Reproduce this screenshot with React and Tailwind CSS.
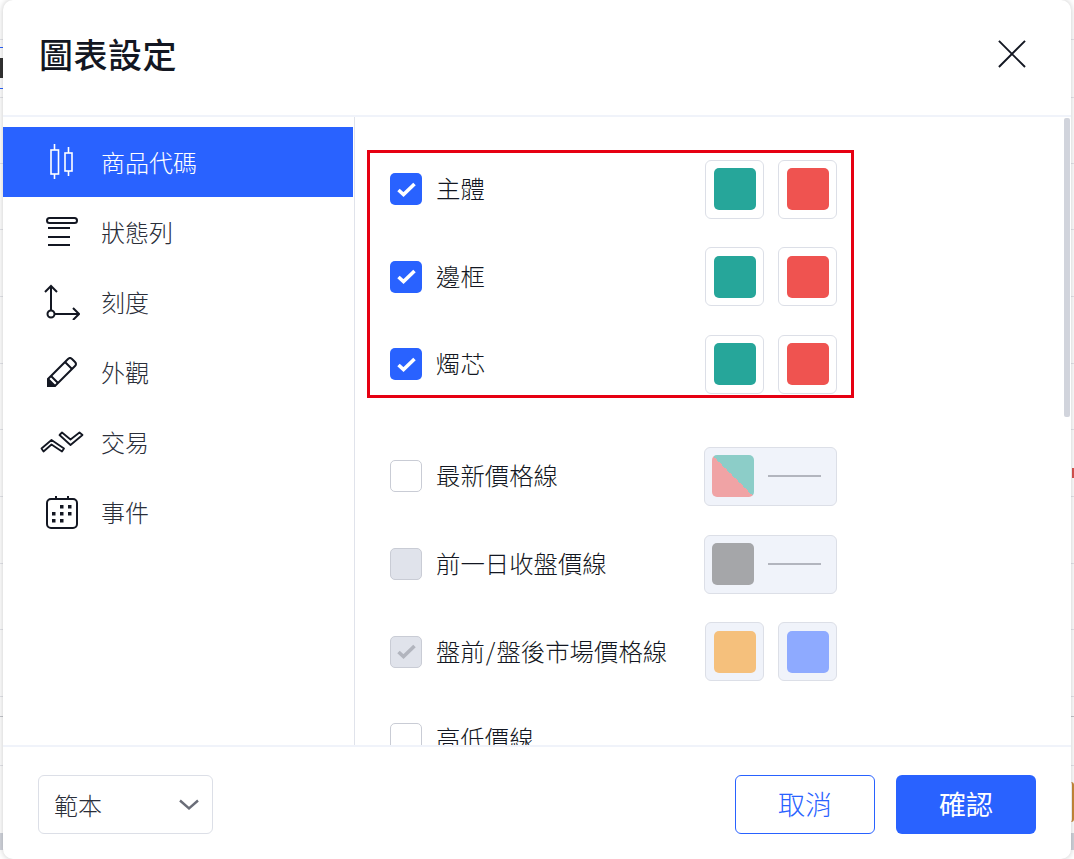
import React from "react";

const font = "font-['Noto_Sans_CJK_TC','Noto_Sans_CJK_SC',sans-serif]";

const CandleIcon = () => (
  <svg width="24" height="36" viewBox="0 0 24 36" fill="none" stroke="currentColor" strokeWidth="1.6">
    <path d="M4.5 0v6M4.5 30v5M18.5 3v6M18.5 27v5" />
    <rect x="1" y="6" width="7.5" height="24" />
    <rect x="15" y="9" width="7" height="18" />
  </svg>
);

const StatusIcon = () => (
  <svg width="32" height="30" viewBox="0 0 32 30" fill="none" stroke="currentColor" strokeWidth="2">
    <rect x="1" y="1" width="30" height="5" rx="2.5" />
    <path d="M2 11h22M2 20h22M2 28h22" />
  </svg>
);

const ScaleIcon = () => (
  <svg width="36" height="36" viewBox="0 0 36 36" fill="none" stroke="currentColor" strokeWidth="2">
    <path d="M7 27V2M1 8l6-6 6 6M11 30h24M29 24l6 6-6 6" />
    <circle cx="7" cy="30" r="3.5" />
  </svg>
);

const PencilIcon = () => (
  <svg width="30" height="30" viewBox="0 0 30 30" fill="none" stroke="currentColor" strokeWidth="2">
    <path d="M1 29v-7L21 2q2-2 4 0l3 3q2 2 0 4L8 29z" />
    <path d="M1 22l7 7M4 19l7 7M18 5l7 7" />
    <path d="M1 29v-5l5 5z" fill="currentColor" />
  </svg>
);

const TradeIcon = () => (
  <svg width="44" height="22" viewBox="0 0 44 22" fill="none" stroke="currentColor" strokeWidth="1.8" strokeLinejoin="round">
    <path d="M1.5 17.5L11.5 9L24 17.5L22 20.5L11.5 13.5L3.5 20.5Z" />
    <path d="M19.5 4L22 1.5L30.5 8.5L39.5 1.5L42.5 4L30.5 14Z" />
  </svg>
);

const CalendarIcon = () => (
  <svg width="32" height="33" viewBox="0 0 32 33" fill="none" stroke="currentColor" strokeWidth="2">
    <rect x="1" y="3" width="30" height="29" rx="4" />
    <path d="M10 0v3M22 0v3" />
    <g fill="currentColor" stroke="none">
      <rect x="14" y="9" width="3.5" height="3.5" />
      <rect x="22" y="9" width="3.5" height="3.5" />
      <rect x="6" y="16" width="3.5" height="3.5" />
      <rect x="14" y="16" width="3.5" height="3.5" />
      <rect x="22" y="16" width="3.5" height="3.5" />
      <rect x="6" y="23" width="3.5" height="3.5" />
      <rect x="14" y="23" width="3.5" height="3.5" />
    </g>
  </svg>
);

const navItems = [
  { label: "商品代碼", icon: <CandleIcon />, active: true },
  { label: "狀態列", icon: <StatusIcon /> },
  { label: "刻度", icon: <ScaleIcon /> },
  { label: "外觀", icon: <PencilIcon /> },
  { label: "交易", icon: <TradeIcon /> },
  { label: "事件", icon: <CalendarIcon /> },
];

// grey row lines of the page behind the dialog
const pageLines = [39, 97, 163, 229, 296, 363, 429, 496, 563, 629, 696, 765];

const Check = ({ color }) => (
  <svg width="19" height="15" viewBox="0 0 19 15" fill="none" stroke={color} strokeWidth="3.6">
    <path d="M1.5 8l5 4.5L17.5 2" />
  </svg>
);

const Checkbox = ({ state }) => {
  if (state === "on") {
    return (
      <div className="flex h-[32px] w-[32px] shrink-0 items-center justify-center rounded-[5px] bg-[#2962ff]">
        <Check color="#ffffff" />
      </div>
    );
  }
  if (state === "disabled") {
    return (
      <div className="flex h-[32px] w-[32px] shrink-0 items-center justify-center rounded-[5px] border border-[#c9ccd5] bg-[#e0e3eb]">
        <Check color="#b2b5be" />
      </div>
    );
  }
  if (state === "muted") {
    return <div className="h-[32px] w-[32px] shrink-0 rounded-[5px] border border-[#c9ccd5] bg-[#e0e3eb]" />;
  }
  return <div className="h-[32px] w-[32px] shrink-0 rounded-[5px] border border-[#c9ccd5] bg-white" />;
};

const Swatch = ({ className, muted }) => (
  <div className={`flex h-[59px] w-[59px] items-center justify-center rounded-[6px] border border-[#dcdfe7] ${muted ? "bg-[#f0f3fa]" : "bg-white"}`}>
    <div className={`h-[42px] w-[42px] rounded-[5px] ${className}`} />
  </div>
);

const LineSwatch = ({ children }) => (
  <div className="flex h-[59px] w-[133px] items-center rounded-[6px] border border-[#dcdfe7] bg-[#f0f3fa] pl-[7px]">
    {children}
    <div className="ml-[14px] h-[2px] w-[53px] bg-[#b2b5be]" />
  </div>
);

const Row = ({ label, state, children, className = "" }) => (
  <div className={`flex h-[59px] items-center ${className}`}>
    <Checkbox state={state} />
    <span className="ml-[14px] flex-1 pb-[2px] text-[24.4px] font-light leading-[32px] text-[#131722]">{label}</span>
    <div className="flex gap-[14px]">{children}</div>
  </div>
);

export default function App() {
  return (
    <div className={`relative h-[859px] w-[1074px] overflow-hidden bg-white ${font}`}>
      {/* page behind the dialog */}
      {pageLines.map((y) => (
        <div key={y} className="absolute left-0 h-px w-full bg-[#e4e5ea]" style={{ top: y }} />
      ))}
      <div className="absolute left-0 top-[716px] h-px w-full bg-[#c4c6cc]" />
      <div className="absolute left-0 top-[47px] h-px w-[3px] bg-[#2962ff]" />
      <div className="absolute left-0 top-[88px] h-px w-[3px] bg-[#2962ff]" />
      <div className="absolute left-0 top-[58px] h-[20px] w-[3px] bg-[#333]" />
      <div className="absolute right-0 top-[468px] h-[10px] w-[2px] bg-[#d9534f]" />
      <div className="absolute right-0 top-[782px] h-[40px] w-[3px] rounded-r-full border-r-2 border-[#c98a3a]" />
      <div className="absolute left-0 top-[833px] h-[17px] w-full bg-[#d1d4dc]" />

      <div className="absolute bottom-0 left-[3px] top-0 flex w-[1068px] flex-col rounded-[10px] bg-white shadow-[0_0_6px_rgba(0,0,0,0.22)]">
        <header className="flex h-[117px] shrink-0 items-center justify-between border-b-2 border-[#f0f3fa] pb-[8px] pl-[36px] pr-[45px]">
          <h1 className="text-[34px] font-medium leading-[44px] tracking-[0.5px] text-[#131722]">圖表設定</h1>
          <svg width="29" height="29" viewBox="0 0 30 30" fill="none" stroke="#131722" strokeWidth="2">
            <path d="M2 2l27 27M29 2L2 29" />
          </svg>
        </header>

        <div className="relative flex min-h-0 flex-1">
          <nav className="w-[352px] shrink-0 border-r border-[#e0e3eb] pt-[10px]">
            {navItems.map((item) => (
              <div
                key={item.label}
                className={`mr-[1px] flex h-[70px] items-center text-[24px] font-light ${item.active ? "bg-[#2962ff] text-white" : "text-[#131722]"}`}
              >
                <div className="flex w-[98px] shrink-0 justify-center pl-[20px]">{item.icon}</div>
                <span className={item.active ? "" : "text-[#2a2e39]"}>{item.label}</span>
              </div>
            ))}
          </nav>

          <div className="min-w-0 flex-1 overflow-hidden pl-[35px] pr-[234px] pt-[42.5px]">
            <div className="flex flex-col gap-[28.6px]">
              <Row label="主體" state="on">
                <Swatch className="bg-[#26a69a]" />
                <Swatch className="bg-[#ef5350]" />
              </Row>
              <Row label="邊框" state="on">
                <Swatch className="bg-[#26a69a]" />
                <Swatch className="bg-[#ef5350]" />
              </Row>
              <Row label="燭芯" state="on">
                <Swatch className="bg-[#26a69a]" />
                <Swatch className="bg-[#ef5350]" />
              </Row>
              <Row label="最新價格線" state="off" className="mt-[24.7px]">
                <LineSwatch>
                  <div className="h-[42px] w-[42px] rounded-[5px] bg-[linear-gradient(45deg,#f0a3a5_50%,#8ccdc8_50%)]" />
                </LineSwatch>
              </Row>
              <Row label="前一日收盤價線" state="muted">
                <LineSwatch>
                  <div className="h-[42px] w-[42px] rounded-[5px] bg-[#a5a6a9]" />
                </LineSwatch>
              </Row>
              <Row label={<>盤前<span className="mx-px">/</span>盤後市場價格線</>} state="disabled">
                <Swatch muted className="bg-[#f5c07c]" />
                <Swatch muted className="bg-[#8eaaff]" />
              </Row>
              <Row label="高低價線" state="off" />
            </div>
          </div>

          {/* scrollbar */}
          <div className="absolute right-[1px] top-[1px] h-[299px] w-[6px] rounded-[2px] bg-[#d1d4dc]" />

          {/* red highlight */}
          <div className="pointer-events-none absolute left-[364px] top-[33px] h-[248px] w-[487px] border-[3px] border-[#e60012]" />
        </div>

        <footer className="flex h-[114px] shrink-0 items-center justify-between border-t-2 border-[#f0f3fa] px-[35px] pt-[3px]">
          <div className="flex h-[59px] w-[175px] items-center justify-between rounded-[6px] border border-[#dcdfe7] pl-[15px] pr-[13px] text-[24px] font-light text-[#2a2e39]">
            <span>範本</span>
            <svg width="20" height="12" viewBox="0 0 20 12" fill="none" stroke="#6a6d78" strokeWidth="2.4">
              <path d="M1 1.5l9 8 9-8" />
            </svg>
          </div>
          <div className="flex gap-[21px]">
            <button className="h-[59px] w-[140px] rounded-[6px] border border-[#2962ff] bg-white text-[27px] font-light text-[#2962ff]">取消</button>
            <button className="h-[59px] w-[140px] rounded-[6px] bg-[#2962ff] text-[27px] text-white">確認</button>
          </div>
        </footer>
      </div>
    </div>
  );
}
